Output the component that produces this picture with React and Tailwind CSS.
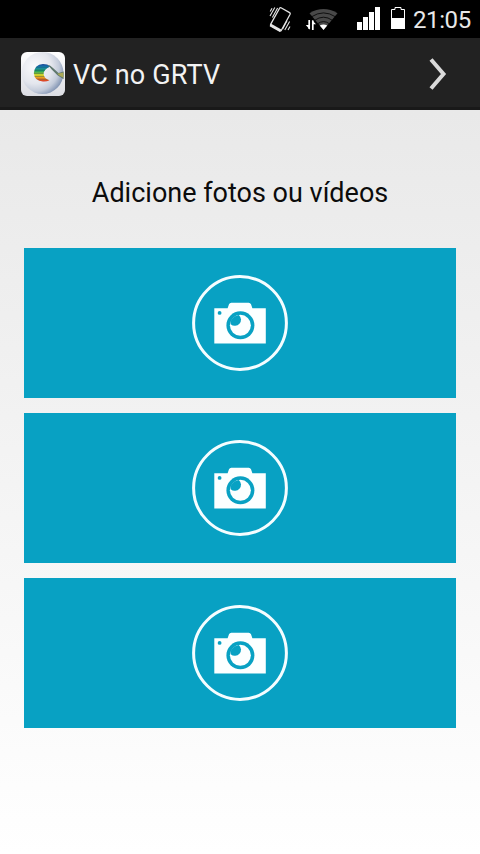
import React from "react";

function VibrateIcon() {
  return (
    <svg className="h-[30px] w-[24px]" viewBox="268 4 24 30" fill="none" stroke="#e4e4e4">
      <path d="M279.6 8.2Q280 7.4 281 7.8L289.6 12.6Q290.6 13.2 290.1 14.2L281.4 30.2Q280.8 31.4 279.8 30.8L271.1 26Q270.1 25.4 270.6 24.4Z" strokeWidth="1.3" />
      <path d="M270.4 25L280.6 30.8" strokeWidth="3" />
      <path d="M274.8 7.5L270 16M277.6 8L272.4 17.4M272 8.2L270.2 11.4M289.6 21.5L284.8 30M287 20.8L282.6 29M290 26.5L288 30" strokeWidth="1.1" />
    </svg>
  );
}

function WifiIcon() {
  return (
    <svg className="h-[24px] w-[34px]" viewBox="305 8 34 24">
      <path d="M309.5 13.2Q323.5 5 337.5 13.2L323.5 30Z" fill="#484848" />
      <path d="M311.5 16.8Q323.5 9 335.5 16.8M314.5 20.4Q323.5 14 332.5 20.4M317.5 23.8Q323.5 19.4 329.5 23.8" fill="none" stroke="#000" strokeWidth=".8" />
      <path d="M319.8 25.6Q323.5 23.2 327.2 25.6L323.5 30Z" fill="#fff" />
      <path d="M305 18H311L318 26V31H305Z" fill="#000" />
      <path d="M309.2 20V29M312.8 20.5V30" stroke="#fff" strokeWidth="1.7" />
      <path d="M305.8 25H310V29.8ZM312 20L316 24.2H312Z" fill="#fff" />
    </svg>
  );
}

function SignalIcon() {
  return (
    <svg className="h-[24px] w-[24px]" viewBox="357 7 24 24" fill="#fff">
      <path d="M357 22h5v8h-5zM363 17h5v13h-5zM369 12h5v18h-5zM375 7h5v23h-5z" />
    </svg>
  );
}

function BatteryIcon() {
  return (
    <svg className="h-[24px] w-[14px]" viewBox="391 6 14 24">
      <path d="M391.5 28.5V9.5H395V7.5H401V9.5H404.5V28.5Z" fill="none" stroke="#fff" />
      <path d="M391 18H405V29H391Z" fill="#fff" />
    </svg>
  );
}

function AppLogo() {
  return (
    <svg className="h-[45px] w-[45px]" viewBox="20 52 45 45">
      <defs>
        <linearGradient id="tile" x1="0" y1="0" x2="0" y2="1">
          <stop offset="0" stopColor="#ffffff" />
          <stop offset="1" stopColor="#dcdde3" />
        </linearGradient>
        <radialGradient id="ball" cx=".32" cy=".36" r=".72">
          <stop offset="0" stopColor="#fafafc" />
          <stop offset=".55" stopColor="#e4e6ed" />
          <stop offset=".8" stopColor="#c3cbda" />
          <stop offset="1" stopColor="#8496b4" />
        </radialGradient>
        <linearGradient id="spectrum" x1="0" y1="0" x2="0" y2="1">
          <stop offset="0" stopColor="#17388f" />
          <stop offset=".2" stopColor="#1681b5" />
          <stop offset=".42" stopColor="#25a45b" />
          <stop offset=".62" stopColor="#dddc26" />
          <stop offset=".8" stopColor="#ef8b20" />
          <stop offset="1" stopColor="#cf2028" />
        </linearGradient>
        <clipPath id="tileClip"><rect x="21" y="52" width="44" height="44" rx="6" /></clipPath>
        <clipPath id="markClip"><path d="M50.5 66.2Q47 64 43 64Q34.5 64.6 33.8 73Q34.5 81 43 81.6Q47 81.8 49.5 80.2Q44 79 43.6 74Q43.6 69.3 50.5 66.2Z" /></clipPath>
      </defs>
      <g clipPath="url(#tileClip)">
        <rect x="21" y="52" width="44" height="44" fill="url(#tile)" />
        <circle cx="42.5" cy="73" r="21" fill="url(#ball)" />
        <g clipPath="url(#markClip)">
          <rect x="33" y="63.5" width="19" height="18.5" fill="url(#spectrum)" />
          <path d="M33 67.3H52M33 70.3H52M33 73.4H52M33 76.4H52M33 79.2H52" stroke="#174b47" strokeOpacity=".65" strokeWidth=".6" />
        </g>
        <path d="M47 64.6Q50.5 65.2 53 68L58.5 73L63.6 71.6V79.2L57.5 75.2L51.5 69.3L49.5 66.7Z" fill="#60786f" />
        <path d="M57.2 73.7L63.4 72.4V77.5L60 76Z" fill="#aaa957" />
      </g>
    </svg>
  );
}

function CameraIcon() {
  return (
    <svg className="h-[110px] w-[110px]" viewBox="0 0 110 110">
      <circle cx="55" cy="55" r="46.4" fill="none" stroke="#f5fdff" strokeWidth="3" />
      <path d="M29.3 40.2H42.6L44 36.2Q44.7 34.7 46.3 34.7H63.7Q65.3 34.7 66 36.2L67.4 40.2H80.8V75.4H29.3Z" fill="#fcffff" />
      <circle cx="34.6" cy="44.9" r="1.9" fill="#08a1c3" />
      <circle cx="55.4" cy="57.3" r="14" fill="#08a1c3" />
      <circle cx="55.4" cy="57.3" r="10.5" fill="#fcffff" />
      <path d="M45.7 53.1A10.5 10.5 0 0 1 53.8 46.9A5.6 5.6 0 1 1 45.7 56.3Z" fill="#08a1c3" />
    </svg>
  );
}

function UploadTile() {
  return (
    <button type="button" aria-label="Adicionar foto ou vídeo" className="flex h-[150px] w-full items-center justify-center bg-[#08a1c3]">
      <CameraIcon />
    </button>
  );
}

export default function App() {
  return (
    <div className="flex h-[854px] w-[480px] flex-col overflow-hidden bg-black font-[Roboto,sans-serif]">
      <div className="flex h-[38px] shrink-0 items-start bg-black text-white">
        <div className="ml-[268px] mt-[4px]"><VibrateIcon /></div>
        <div className="ml-[13px] mt-[8px]"><WifiIcon /></div>
        <div className="ml-[18px] mt-[7px]"><SignalIcon /></div>
        <div className="ml-[10px] mt-[6px]"><BatteryIcon /></div>
        <span className="ml-[8px] mt-[4px] whitespace-nowrap text-[24px] leading-[32px] tracking-[-0.4px] text-[#e8e8e8]">21:05</span>
      </div>
      <header className="flex h-[72px] shrink-0 items-center border-b-[3px] border-[#191919] bg-[#222222] pl-[20px] pt-[3px]">
        <AppLogo />
        <h1 className="ml-[8px] mt-[2px] whitespace-nowrap text-[27px] leading-[32px] tracking-[0.15px] text-[#f3f3f3]">VC no GRTV</h1>
        <svg className="ml-auto mr-[30px] h-[36px] w-[24px]" viewBox="426 56 24 36" fill="none" stroke="#dadada" strokeWidth="4">
          <path d="M431 59.5L443.5 74L431 88.5" />
        </svg>
      </header>
      <main className="flex flex-1 flex-col bg-linear-to-b from-[#e9e9e9] to-white px-[24px] pt-[67px]">
        <h2 className="whitespace-nowrap text-center text-[27px] leading-[32px] text-[#0c0c0c]">Adicione fotos ou vídeos</h2>
        <div className="mt-[39px] flex flex-col gap-[15px]">
          <UploadTile />
          <UploadTile />
          <UploadTile />
        </div>
      </main>
    </div>
  );
}
